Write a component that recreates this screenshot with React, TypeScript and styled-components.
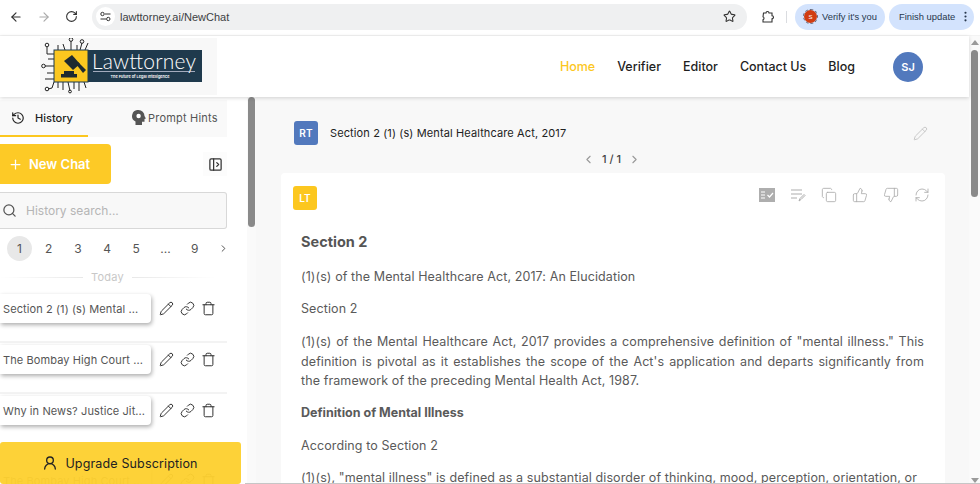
import React from 'react';
import styled, { createGlobalStyle } from 'styled-components';
import { ArrowLeft, ArrowRight, RotateCw, Star, EllipsisVertical, History, Plus, PanelLeftOpen, Search, ChevronRight, ChevronLeft, Pencil, Link, Trash, UserRound, Copy, ThumbsUp, ThumbsDown, RefreshCw } from 'lucide-react';

const Global = createGlobalStyle`
  html, body { margin: 0; padding: 0; width: 980px; height: 484px; overflow: hidden; background: #fff; }
  * { box-sizing: border-box; }
  body { font-family: Inter, "Open Sans", "Liberation Sans", sans-serif; }
`;
const Page = styled.div`width: 980px; height: 484px; display: flex; flex-direction: column; overflow: hidden;`;
const Chrome = styled.div`height: 36px; flex: none; background: #fff; display: flex; align-items: center; padding: 0 5px 2px 9px; border-bottom: 1px solid #f3f3f3;`;
const NavIcon = styled.span<{ $c?: string; $w?: number }>`width: ${p => p.$w ?? 28}px; display: flex; color: ${p => p.$c ?? '#333'};`;
const Omni = styled.div`margin-left: 7px; width: 655px; height: 26px; border-radius: 13px; background: #eff0f1; display: flex; align-items: center; padding: 0 11px 0 4px;`;
const Tune = styled.span`width: 19px; height: 19px; border-radius: 50%; background: #fff; display: flex; align-items: center; justify-content: center; color: #333;`;
const Url = styled.span`margin-left: 5px; flex: 1; font: 11px "Liberation Sans", sans-serif; color: #3c4043;`;
const PuzzleSlot = styled.span`margin-left: 14px; width: 14px; display: flex; color: #333;`;
const Pill = styled.div<{ $w: number; $pl: number; $ml: number }>`height: 26px; width: ${p => p.$w}px; margin-left: ${p => p.$ml}px; border-radius: 13px; background: #d3e3fd; display: flex; align-items: center; justify-content: flex-start; padding-left: ${p => p.$pl}px; font: 9.4px "Liberation Sans", sans-serif; color: #27374d; flex: none; gap: 4px; white-space: nowrap;`;
const Badge = styled.span`width: 13px; height: 13px; margin-right: 1px; border-radius: 50%; background: #d13d12; color: #fff; font-size: 6px; display: flex; align-items: center; justify-content: center; outline: 1px dashed #667; outline-offset: 0;`;
const Sep = styled.span`width: 1px; height: 12px; background: #dadce0; margin: 0 8px 0 11px;`;
const Below = styled.div`flex: 1; min-height: 0; display: flex; position: relative;`;
const Column = styled.div`flex: 1; min-width: 0; display: flex; flex-direction: column;`;
const Header = styled.header`height: 61px; flex: none; display: flex; align-items: center; background: #fff; box-shadow: 0 1px 4px rgba(0,0,0,.16); position: relative; z-index: 3; padding-right: 46px;`;
const LogoBox = styled.div`margin: 2px 0 0 40px; width: 177px; height: 57px; background: #f8f8f8; align-self: flex-start; padding-left: 1px;`;
const Nav = styled.nav`margin: 0 0 0 auto; display: flex; align-items: center; font-size: 12.5px; font-weight: 500; color: #222;`;
const NavLink = styled.span<{ $active?: boolean; $gap?: number }>`color: ${p => p.$active ? '#fcc71f' : '#1f1f1f'}; margin-right: ${p => p.$gap ?? 22}px; white-space: nowrap;`;
const Avatar = styled.span`width: 30px; height: 30px; border-radius: 50%; background: #5279bd; color: #fff; font-size: 11px; font-weight: 600; display: flex; align-items: center; justify-content: center;`;
const Body = styled.div`flex: 1; min-height: 0; display: flex; background: #f8f8f8;`;
const Side = styled.aside`width: 247px; flex: none; background: #fff; position: relative; overflow: hidden;`;
const Tabs = styled.div`width: 227px; height: 37px; margin-top: 3px; display: flex; background: #f9f9f9;`;
const Tab = styled.div<{ $active?: boolean; $w: number }>`width: ${p => p.$w}px; display: flex; align-items: center; gap: ${p => p.$active ? 10 : 2}px; font-size: 11px; font-weight: ${p => p.$active ? 500 : 400}; letter-spacing: ${p => p.$active ? 0 : .2}px; color: ${p => p.$active ? '#222' : '#555'}; border-bottom: 2px solid ${p => p.$active ? '#fcc71f' : 'transparent'}; padding-left: ${p => p.$active ? 11 : 44}px;`;
const SideBar = styled.div`display: flex; width: 227px; justify-content: space-between; align-items: center; margin-top: 7px;`;
const NewChat = styled.div`width: 111px; height: 40px; background: #fdca26; border-radius: 0 4px 4px 0; color: #fff; font-size: 13px; font-weight: 600; display: flex; align-items: center; gap: 6px; padding-left: 8px;`;
const Toggle = styled.span`width: 24px; height: 24px; display: flex; align-items: center; justify-content: center; background: #fcfcfc; color: #333;`;
const SearchBox = styled.div`width: 227px; height: 37px; margin-top: 8px; background: #f8f8f8; border: 1px solid #d8d8d8; border-left: none; border-radius: 0 3px 3px 0; display: flex; align-items: center; gap: 9px; padding-left: 2px; font-size: 12px; color: #b5b5b5;`;
const Pager = styled.div`width: 232px; display: flex; align-items: center; margin-top: 7px; height: 24px; padding-left: 7px;`;
const PageNo = styled.span<{ $on?: boolean }>`width: 25px; height: 25px; margin-right: 4.2px; border-radius: 50%; background: ${p => p.$on ? '#e8e8e8' : 'transparent'}; display: flex; align-items: center; justify-content: center; font-size: 12px; color: #555;`;
const PagerNext = styled.span`display: flex; margin-left: 7px; color: #444;`;
const Today = styled.div`width: 215px; display: flex; align-items: center; justify-content: center; gap: 8px; font-size: 11px; letter-spacing: .2px; color: #c8c8c8; margin-top: 9px; height: 16px;`;
const Rule = styled.span`height: 1px; width: 84px; background: linear-gradient(90deg, transparent, #e8e8e8);`;
const RuleR = styled(Rule)`background: linear-gradient(270deg, transparent, #e8e8e8);`;
const Rows = styled.div`margin-top: 7px;`;
const Row = styled.div<{ $late?: boolean }>`width: 227px; height: 51px; margin-top: ${p => p.$late ? 19 : 0}px; display: flex; align-items: flex-start; padding-top: 2px; border-bottom: 1px solid #f3f3f3; box-shadow: inset 0 -8px 0 -7px #f3f3f3;`;
const ChatTitle = styled.div`width: 151px; height: 29px; flex: none; background: #fff; border-radius: 0 4px 4px 0; box-shadow: 1px 2px 4px rgba(0,0,0,.32); display: flex; align-items: center; padding-left: 3px; font-size: 11px; letter-spacing: .1px; color: #555; white-space: nowrap; overflow: hidden;`;
const RowIcons = styled.div`display: flex; margin-left: 8px; gap: 6px; color: #333; height: 29px; align-items: center;`;
const Upgrade = styled.div`position: absolute; z-index: 2; left: 0; top: 345px; width: 241px; height: 42px; background: rgba(253,208,48,.96); border-radius: 3px; display: flex; align-items: center; justify-content: center; gap: 7px; padding-right: 1px; font-size: 12.5px; letter-spacing: .15px; font-weight: 400; color: #222;`;
const Track = styled.div`width: 9px; flex: none; background: #fafafa; padding-left: 1px;`;
const Thumb = styled.div<{ $h: number }>`width: 7px; height: ${p => p.$h}px; background: #8a8a8a; border-radius: 4px; flex: none;`;
const RightBar = styled.div`width: 11px; flex: none; background: #fafafa; display: flex; flex-direction: column; align-items: center; padding: 4px 0 1px;`;
const ArrowUp = styled.span`width: 0; height: 0; border: 4px solid transparent; border-top: none; border-bottom: 5px solid #9a9a9a; margin-bottom: 5px;`;
const ArrowDown = styled.span`width: 0; height: 0; border: 4px solid transparent; border-bottom: none; border-top: 5px solid #9a9a9a; margin-top: auto;`;
const BottomLine = styled.div`position: absolute; z-index: 4; left: 245px; right: 0; bottom: 0; height: 1px; background: #c6c6c6;`;
const Main = styled.main`flex: 1; min-width: 0; padding: 24px 24px 0 25px; overflow: hidden;`;
const UserRow = styled.div`height: 24px; display: flex; align-items: center; gap: 12px; padding-left: 13px; font-size: 11px; font-weight: 400; letter-spacing: .12px; color: #222; padding-right: 17px;`;
const Square = styled.span<{ $bg: string }>`width: 24px; height: 24px; border-radius: 3px; background: ${p => p.$bg}; color: #fff; font-size: 10px; font-weight: 600; display: flex; align-items: center; justify-content: center;`;
const Grow = styled.span`flex: 1;`;
const Paging = styled.div`display: flex; justify-content: center; align-items: center; gap: 7px; height: 16px; margin: 6px 3px 0 0; font-size: 11px; color: #444; font-weight: 500;`;
const Card = styled.article`background: #fff; margin-top: 6px; border-radius: 4px; padding: 13px 21px 0 20px; height: 400px;`;
const CardTop = styled.div`display: flex; justify-content: space-between; align-items: flex-start; margin: 0 -6px 0 -8px;`;
const Actions = styled.div`display: flex; gap: 15px; color: #aeaeae; margin-top: 1px;`;
const Title = styled.h2`margin: 22px 0 0; font-size: 14.5px; line-height: 20px; font-weight: 700; color: #555;`;
const Para = styled.p<{ $top?: number }>`margin: ${p => p.$top ?? 12.5}px 0 0; font-size: 12.5px; letter-spacing: .1px; line-height: 19.6px; color: #5a5a5a; text-align: justify;`;
const Bold = styled(Para)`font-weight: 700; letter-spacing: 0;`;

const TuneIcon = () => (
  <svg width="11" height="11" viewBox="0 0 11 11" fill="none" stroke="currentColor" strokeWidth="1">
    <path d="M5 3h5.5M.5 8H6" /><circle cx="2.5" cy="3" r="1.7" /><circle cx="8.3" cy="8" r="1.7" />
  </svg>
);
const PuzzleIcon = () => (
  <svg width="14" height="14" viewBox="0 0 14 14" fill="none" stroke="currentColor" strokeWidth="1.1">
    <path d="M2.5 3H5a1.5 1.5 0 0 1 3 0h3v2.7a1.5 1.5 0 0 1 0 3V12H2v-2.3a1.5 1.5 0 0 0 1-1.5 1.5 1.5 0 0 0-1-1.4z" />
  </svg>
);
const HeadIcon = () => (
  <svg width="14" height="15" viewBox="0 0 14 15">
    <path fill="#555" d="M6.5 0A6 6 0 0 1 12.5 6l1.4 2.5-1.4.5v2.8H10V15H3.5v-3.6A6 6 0 0 1 6.5 0z" />
    <circle cx="6.6" cy="6" r="2.2" fill="#fff" />
  </svg>
);
const ReportIcon = () => (
  <svg width="16" height="16" viewBox="0 0 16 16">
    <rect y="1" width="16" height="14" fill="#aeaeae" />
    <path d="M2 5h4M2 8h4M2 11h4M8.5 8l2 2 3.5-4" stroke="#fff" strokeWidth="1.2" fill="none" />
  </svg>
);
const EditLinesIcon = () => (
  <svg width="16" height="16" viewBox="0 0 16 16" fill="none" stroke="currentColor" strokeWidth="1.2">
    <path d="M1 3h11M1 7h11M1 11h6" /><path d="M9 14l1-2.5L14 7.5l1 1-4 4z" strokeWidth="1" />
  </svg>
);

const Logo = () => (
  <svg width="170" height="56" viewBox="0 2 170 56" aria-label="Lawttorney logo">
    <g stroke="#222" strokeWidth="1" fill="none">
      <path d="M6 11v7h7M17 9v5M22 8l2 6M30 5v9M36 9v5M41 7l-2 7M47 7l-3 7" />
      <circle cx="6" cy="9" r="1.8" /><circle cx="30" cy="3.5" r="1.8" /><circle cx="41" cy="5.5" r="1.8" />
      <path d="M7 23h6M4 30h9M6 37h7M4 43h9M17 46v6M22 46v8M27 46l2 9M33 46v7M38 46v9M43 46l2 6M7 53l4-1 2-6" />
      <circle cx="2.5" cy="30" r="1.8" /><circle cx="6" cy="53" r="1.8" /><circle cx="29" cy="55.5" r="1.4" />
    </g>
    <rect x="13" y="14" width="34" height="32" fill="#fcc71f" stroke="#1d3a4e" />
    <rect x="47" y="14" width="114" height="32" fill="#1f3a4d" />
    <g fill="#1f2a30">
      <rect x="20" y="38" width="16" height="3.5" /><rect x="23" y="35" width="10" height="3" />
      <path d="M31 19l8 9-7 6-9-9z" /><path d="M35 28l2-2 8 8-3 3z" />
    </g>
    <text x="51" y="33" fontFamily="Lato, sans-serif" fontSize="21" textLength="104" fill="#fff" fontWeight="300">Lawttorney</text>
    <rect x="52" y="35" width="102" height=".7" fill="#dde" />
    <text x="99" y="42" fontFamily="Inter, sans-serif" fontSize="3.9" fill="#fff" fontWeight="600" textAnchor="middle">The Future of Legal Intelligence</text>
  </svg>
);

const titles = ['Section 2 (1) (s) Mental ...', 'The Bombay High Court ...', 'Why in News? Justice Jit...', 'The Bombay High Court ...'];

export default function App() {
  return (
    <Page>
      <Global />
      <Chrome>
        <NavIcon><ArrowLeft size={14} /></NavIcon>
        <NavIcon $c="#aaa"><ArrowRight size={14} /></NavIcon>
        <NavIcon $w={20}><RotateCw size={13} /></NavIcon>
        <Omni>
          <Tune><TuneIcon /></Tune>
          <Url>lawttorney.ai/NewChat</Url>
          <Star size={13} color="#333" />
        </Omni>
        <PuzzleSlot><PuzzleIcon /></PuzzleSlot>
        <Sep />
        <Pill $w={90} $pl={9} $ml={0}><Badge>S</Badge><span>Verify it's you</span></Pill>
        <Pill $w={85} $pl={10} $ml={4}><span>Finish update</span><EllipsisVertical size={13} /></Pill>
      </Chrome>
      <Below>
        <Column>
          <Header>
            <LogoBox><Logo /></LogoBox>
            <Nav>
              <NavLink $active>Home</NavLink>
              <NavLink>Verifier</NavLink>
              <NavLink>Editor</NavLink>
              <NavLink>Contact Us</NavLink>
              <NavLink $gap={38}>Blog</NavLink>
              <Avatar>SJ</Avatar>
            </Nav>
          </Header>
          <Body>
            <Side>
              <Tabs>
                <Tab $active $w={88}><History size={14} />History</Tab>
                <Tab $w={139}><HeadIcon />Prompt Hints</Tab>
              </Tabs>
              <SideBar>
                <NewChat><Plus size={15} />New Chat</NewChat>
                <Toggle><PanelLeftOpen size={15} /></Toggle>
              </SideBar>
              <SearchBox><Search size={15} color="#555" />History search...</SearchBox>
              <Pager>
                <PageNo $on>1</PageNo><PageNo>2</PageNo><PageNo>3</PageNo><PageNo>4</PageNo><PageNo>5</PageNo><PageNo>...</PageNo><PageNo>9</PageNo>
                <PagerNext><ChevronRight size={11} /></PagerNext>
              </Pager>
              <Today><Rule />Today<RuleR /></Today>
              <Rows>
                {titles.map((t, i) => (
                  <Row key={i} $late={i === 3}>
                    <ChatTitle>{t}</ChatTitle>
                    <RowIcons><Pencil size={15} strokeWidth={1.6} /><Link size={15} strokeWidth={1.6} /><Trash size={15} strokeWidth={1.6} /></RowIcons>
                  </Row>
                ))}
              </Rows>
              <Upgrade><UserRound size={16} />Upgrade Subscription</Upgrade>
            </Side>
            <Track><Thumb $h={130} /></Track>
            <Main>
              <UserRow>
                <Square $bg="#5279bd">RT</Square>
                Section 2 (1) (s) Mental Healthcare Act, 2017
                <Grow />
                <Pencil size={15} color="#bbb" strokeWidth={1.25} />
              </UserRow>
              <Paging><ChevronLeft size={13} color="#999" />1 / 1<ChevronRight size={13} color="#999" /></Paging>
              <Card>
                <CardTop>
                  <Square $bg="#fcc71f">LT</Square>
                  <Actions>
                    <ReportIcon /><EditLinesIcon /><Copy size={16} strokeWidth={1.3} /><ThumbsUp size={16} strokeWidth={1.3} /><ThumbsDown size={16} strokeWidth={1.3} /><RefreshCw size={16} strokeWidth={1.3} />
                  </Actions>
                </CardTop>
                <Title>Section 2</Title>
                <Para $top={15}>(1)(s) of the Mental Healthcare Act, 2017: An Elucidation</Para>
                <Para>Section 2</Para>
                <Para $top={13.5}>(1)(s) of the Mental Healthcare Act, 2017 provides a comprehensive definition of "mental illness." This definition is pivotal as it establishes the scope of the Act's application and departs significantly from the framework of the preceding Mental Health Act, 1987.</Para>
                <Bold>Definition of Mental Illness</Bold>
                <Para>According to Section 2</Para>
                <Para>(1)(s), "mental illness" is defined as a substantial disorder of thinking, mood, perception, orientation, or</Para>
              </Card>
            </Main>
          </Body>
        </Column>
        <RightBar><ArrowUp /><Thumb $h={147} /><ArrowDown /></RightBar>
        <BottomLine />
      </Below>
    </Page>
  );
}
